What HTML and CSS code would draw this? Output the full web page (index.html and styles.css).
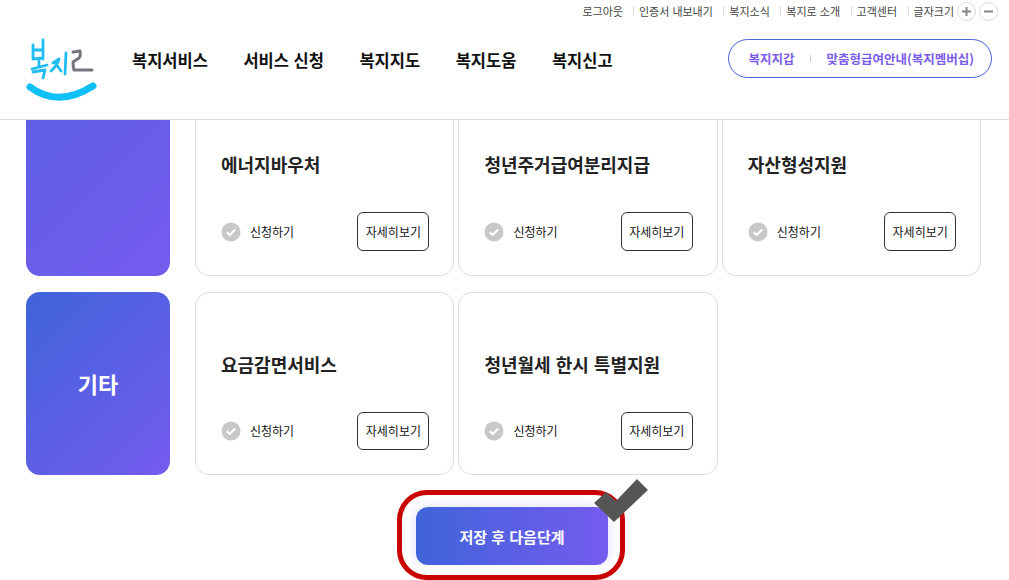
FILE: index.html
```html
<!DOCTYPE html>
<html lang="ko">
<head>
    <meta charset="UTF-8">
    <meta name="viewport" content="width=device-width, initial-scale=1.0">
    <title>복지로</title>
    <link rel="stylesheet" href="styles.css">
</head>
<body>
    <header class="header">
        <div class="util">
            <a href="#">로그아웃</a>
            <a href="#" class="sep">인증서 내보내기</a>
            <a href="#" class="sep">복지소식</a>
            <a href="#" class="sep">복지로 소개</a>
            <a href="#" class="sep">고객센터</a>
            <span class="sep">글자크기</span>
            <button class="zoom-btn"><svg width="11" height="11" viewBox="0 0 11 11"><path d="M1 5.5 H10 M5.5 1 V10" stroke="#888" stroke-width="2"/></svg></button>
            <button class="zoom-btn"><svg width="11" height="11" viewBox="0 0 11 11"><path d="M1 5.5 H10" stroke="#888" stroke-width="2"/></svg></button>
        </div>
        <div class="gnb">
            <svg class="logo" width="74" height="68" viewBox="0 0 74 68">
                <g fill="none" stroke="#1fbdf2" stroke-width="2.8" stroke-linecap="round" stroke-linejoin="round">
                    <path d="M9 7 L9 20 M19 2 L19 21 M9 12 L19 12 M9 21 L19 20"/>
                    <path d="M8 31 L23 27 M15 23 L15 28 M9 34 L21 32 Q20 36 19 40"/>
                    <path d="M29 25 L35 21 Q33 28 27 33 M32 26 L37 33 M42 15 L41 36"/>
                </g>
                <path d="M49 14 L56 13 Q57 18 55 20 L49 24 Q49 29 50 32 L68 32" fill="none" stroke="#75767c" stroke-width="3" stroke-linecap="round" stroke-linejoin="round"/>
                <path d="M6 49 Q34 70 69 48" fill="none" stroke="#0fc0f7" stroke-width="7" stroke-linecap="round"/>
            </svg>
            <nav class="menu">
                <a href="#">복지서비스</a>
                <a href="#">서비스 신청</a>
                <a href="#">복지지도</a>
                <a href="#">복지도움</a>
                <a href="#">복지신고</a>
            </nav>
            <div class="quick">
                <a href="#">복지지갑</a>
                <i></i>
                <a href="#">맞춤형급여안내(복지멤버십)</a>
            </div>
        </div>
    </header>

    <main class="content">
        <section class="group">
            <div class="group-title group-title-tall"></div>
            <div class="cards">
                <div class="card">
                    <h3>에너지바우처</h3>
                    <div class="card-foot">
                        <span class="apply"><svg width="20" height="20" viewBox="0 0 20 20"><circle cx="10" cy="10" r="9.5" fill="#c8c8c8"/><path d="M5.8 10.2 L8.8 13 L14.2 7.4" fill="none" stroke="#fff" stroke-width="2.2"/></svg>신청하기</span>
                        <a href="#" class="more">자세히보기</a>
                    </div>
                </div>
                <div class="card">
                    <h3>청년주거급여분리지급</h3>
                    <div class="card-foot">
                        <span class="apply"><svg width="20" height="20" viewBox="0 0 20 20"><circle cx="10" cy="10" r="9.5" fill="#c8c8c8"/><path d="M5.8 10.2 L8.8 13 L14.2 7.4" fill="none" stroke="#fff" stroke-width="2.2"/></svg>신청하기</span>
                        <a href="#" class="more">자세히보기</a>
                    </div>
                </div>
                <div class="card">
                    <h3>자산형성지원</h3>
                    <div class="card-foot">
                        <span class="apply"><svg width="20" height="20" viewBox="0 0 20 20"><circle cx="10" cy="10" r="9.5" fill="#c8c8c8"/><path d="M5.8 10.2 L8.8 13 L14.2 7.4" fill="none" stroke="#fff" stroke-width="2.2"/></svg>신청하기</span>
                        <a href="#" class="more">자세히보기</a>
                    </div>
                </div>
            </div>
        </section>
        <section class="group">
            <div class="group-title">기타</div>
            <div class="cards">
                <div class="card">
                    <h3>요금감면서비스</h3>
                    <div class="card-foot">
                        <span class="apply"><svg width="20" height="20" viewBox="0 0 20 20"><circle cx="10" cy="10" r="9.5" fill="#c8c8c8"/><path d="M5.8 10.2 L8.8 13 L14.2 7.4" fill="none" stroke="#fff" stroke-width="2.2"/></svg>신청하기</span>
                        <a href="#" class="more">자세히보기</a>
                    </div>
                </div>
                <div class="card">
                    <h3>청년월세 한시 특별지원</h3>
                    <div class="card-foot">
                        <span class="apply"><svg width="20" height="20" viewBox="0 0 20 20"><circle cx="10" cy="10" r="9.5" fill="#c8c8c8"/><path d="M5.8 10.2 L8.8 13 L14.2 7.4" fill="none" stroke="#fff" stroke-width="2.2"/></svg>신청하기</span>
                        <a href="#" class="more">자세히보기</a>
                    </div>
                </div>
            </div>
        </section>
        <div class="actions">
            <button class="save">저장 후 다음단계</button>
            <span class="mark-box"></span>
            <svg class="mark-check" width="60" height="50" viewBox="0 0 60 50"><polygon points="47,4 58,15 24,47 4,28 16,17 26,26" fill="#555"/></svg>
        </div>
    </main>
</body>
</html>
```

FILE: styles.css
```css
* {
    box-sizing: border-box;
}
html, body {
    height: 580px;
    overflow: hidden;
}
body {
    margin: 0;
    background-color: #fff;
    color: #111;
    font-family: "Noto Sans CJK KR", "Noto Sans", sans-serif;
}
a {
    color: inherit;
    text-decoration: none;
}
.header {
    position: relative;
    z-index: 2;
    height: 120px;
    background-color: #fff;
    border-bottom: 1px solid #ddd;
}
.util {
    display: flex;
    justify-content: flex-end;
    align-items: center;
    height: 22px;
    padding-right: 11px;
    font-size: 11px;
    color: #444;
}
.util .sep {
    margin-left: 5px;
    padding-left: 5px;
    border-left: 1px solid #ddd;
    line-height: 10px;
}
.util a:first-child {
    margin-right: 5px;
}
.util .sep + .sep {
    margin-left: 10.5px;
}
.zoom-btn {
    display: flex;
    align-items: center;
    justify-content: center;
    width: 19px;
    height: 19px;
    margin-left: 3px;
    padding: 0;
    border: 1px solid #ddd;
    border-radius: 50%;
    background-color: #fff;
}
.gnb {
    display: flex;
    align-items: center;
    height: 76px;
    padding: 0 17px 0 24px;
}
.logo {
    flex: none;
    margin-top: 24px;
}
.menu {
    display: flex;
    gap: 35.5px;
    margin-left: 34px;
    font-size: 16.5px;
    font-weight: 700;
}
.quick {
    display: flex;
    align-items: center;
    height: 39px;
    margin-left: auto;
    margin-top: -3px;
    padding: 0 17px 0 20px;
    border: 1px solid #4a63d8;
    border-radius: 20px;
    color: #7a5ce8;
    font-size: 12.5px;
    font-weight: 700;
}
.quick i {
    width: 1px;
    height: 7px;
    margin: 0 15.5px;
    background-color: #ccc;
}
.content {
    margin-top: -427.2px;
    padding: 0 28px 0 26px;
}
.group {
    display: flex;
    align-items: flex-end;
    margin-bottom: 16px;
}
.group-title {
    display: flex;
    flex: none;
    align-items: center;
    justify-content: center;
    width: 144px;
    height: 183.4px;
    margin-right: 25px;
    padding-bottom: 2px;
    border-radius: 14px;
    background: linear-gradient(135deg, #3f64da, #755bee);
    color: #fff;
    font-size: 22px;
    font-weight: 700;
}
.group-title-tall {
    height: 583px;
}
.cards {
    display: flex;
    gap: 4px;
}
.card {
    display: flex;
    flex-direction: column;
    justify-content: space-between;
    width: 259.4px;
    height: 183.4px;
    padding: 58px 24px 24px 25px;
    border: 1px solid #ddd;
    border-radius: 14px;
    background-color: #fff;
}
.card h3 {
    margin: 0;
    font-size: 18px;
    line-height: 26px;
    font-weight: 700;
    color: #222;
}
.card-foot {
    display: flex;
    align-items: center;
    justify-content: space-between;
}
.apply {
    display: flex;
    align-items: center;
    gap: 9px;
    font-size: 12px;
    color: #111;
}
.more {
    display: flex;
    align-items: center;
    justify-content: center;
    width: 72px;
    height: 38.6px;
    border: 1px solid #333;
    border-radius: 6px;
    font-size: 12px;
    color: #111;
}
.actions {
    position: relative;
    display: flex;
    justify-content: center;
    margin-left: 17px;
    padding-top: 16px;
}
.save {
    width: 192px;
    height: 58px;
    border: 0;
    border-radius: 12px;
    background: linear-gradient(90deg, #3f64da, #755bee);
    box-shadow: 0 0 14px rgba(90, 90, 230, 0.2);
    clip-path: inset(-20px -20px 0 -20px);
    color: #fff;
    font-family: inherit;
    font-size: 15px;
    font-weight: 700;
}
.mark-box {
    position: absolute;
    top: -1px;
    left: 354px;
    width: 228px;
    height: 90px;
    border: 5px solid #c90000;
    border-radius: 30px;
}
.mark-check {
    position: absolute;
    top: -16px;
    left: 547px;
}
```
